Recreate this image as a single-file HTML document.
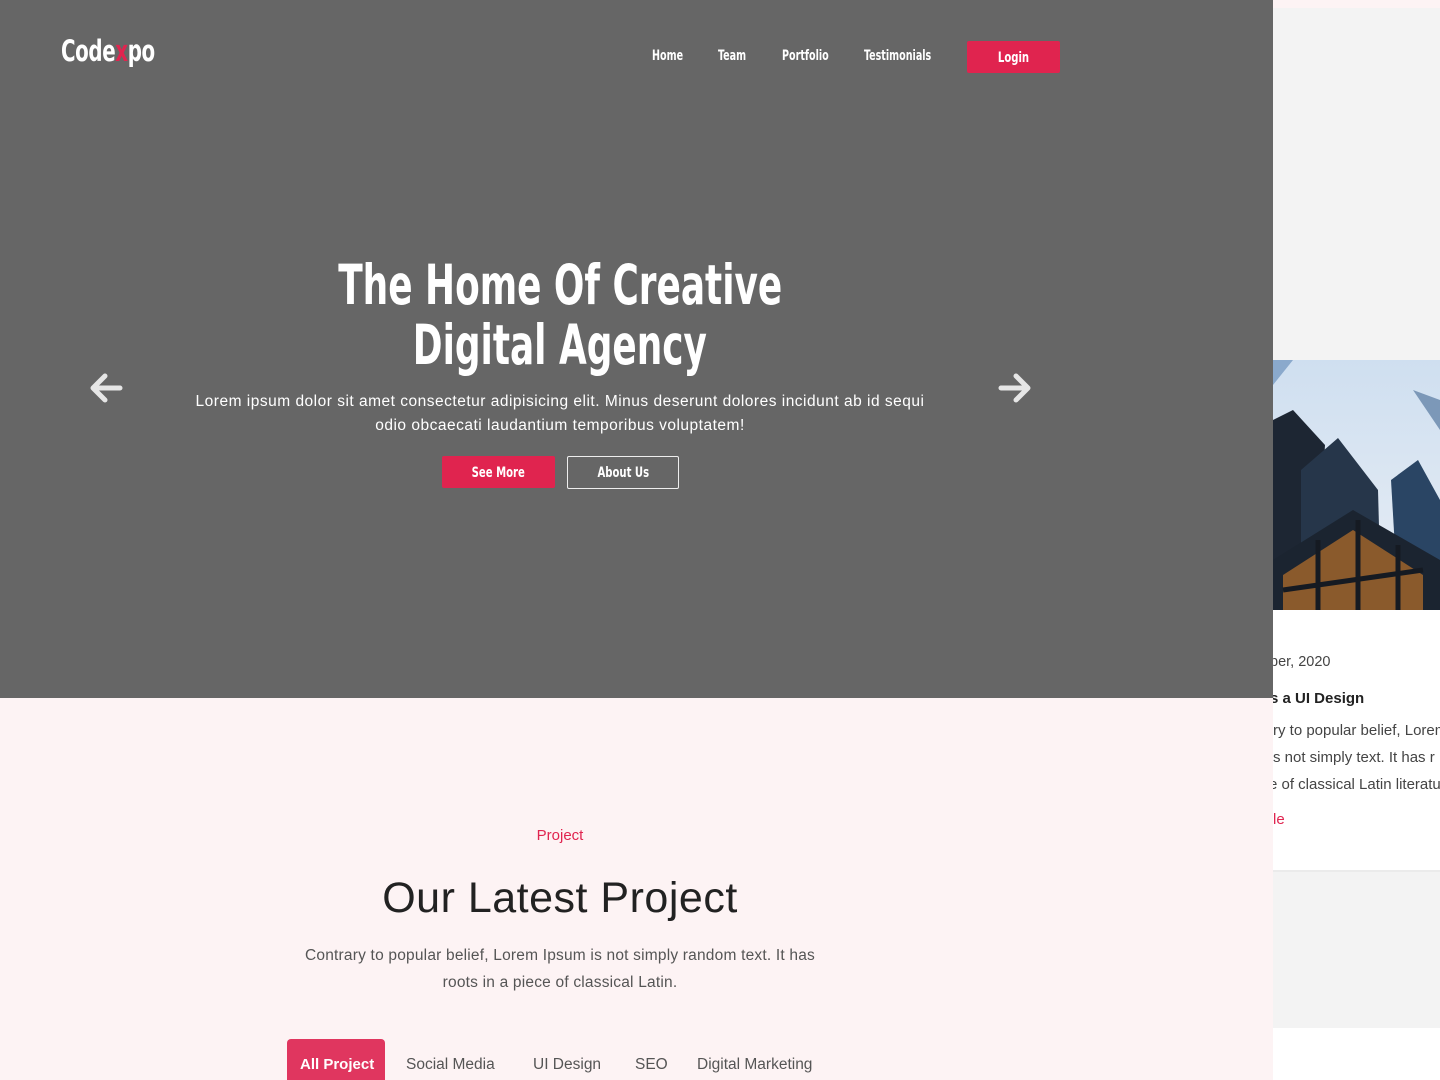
<!DOCTYPE html>
<html><head><meta charset="utf-8"><style>
*{margin:0;padding:0;box-sizing:border-box}
html,body{width:1440px;height:1080px;overflow:hidden}
body{position:relative;background:#fdf3f4;font-family:"Liberation Sans",sans-serif}
.cond{font-family:"Liberation Sans Narrow","DejaVu Sans Condensed","Liberation Sans",sans-serif;font-weight:bold}
.hero{position:absolute;left:0;top:0;width:1273px;height:698px;background:#666666;color:#fff}
.abs{position:absolute}
.sx{display:inline-block;transform:scaleX(0.76);transform-origin:0 50%}
.logo{left:61px;top:34px;font-size:29px;letter-spacing:-0.5px}
.nav{top:48px;font-size:14px;color:#fff}
.btn{position:absolute;background:#e0244f;color:#fff;border-radius:2px;text-align:center;font-size:14px}
.btn span{display:inline-block;transform:scaleX(0.8)}
.title{left:0;width:1120px;text-align:center;font-size:55px;line-height:60px;top:255px}
.title span{display:inline-block;transform:scaleX(0.725)}
.p{left:185px;width:750px;top:390px;text-align:center;font-size:15.5px;line-height:24px;letter-spacing:0.5px}
.right{position:absolute;left:1273px;top:0;width:167px;height:1080px;background:#fff;overflow:hidden}
</style></head><body>
<div class="hero">
 <div class="abs logo cond"><span class="sx">Code<span style="color:#e0244f">x</span>po</span></div>
 <div class="abs nav cond" style="left:652px"><span class="sx">Home</span></div>
 <div class="abs nav cond" style="left:718px"><span class="sx">Team</span></div>
 <div class="abs nav cond" style="left:782px"><span class="sx">Portfolio</span></div>
 <div class="abs nav cond" style="left:864px"><span class="sx">Testimonials</span></div>
 <div class="btn cond" style="left:967px;top:41px;width:93px;height:32px;line-height:34px"><span>Login</span></div>
 <div class="abs title cond"><span>The Home Of Creative</span><br><span>Digital Agency</span></div>
 <div class="abs p">Lorem ipsum dolor sit amet consectetur adipisicing elit. Minus deserunt dolores incidunt ab id sequi odio obcaecati laudantium temporibus voluptatem!</div>
 <div class="btn cond" style="left:442px;top:456px;width:113px;height:32px;line-height:34px"><span>See More</span></div>
 <div class="btn cond" style="left:567px;top:456px;width:112px;height:33px;line-height:33px;background:none;border:1.5px solid #eee"><span>About Us</span></div>
 <svg class="abs" style="left:88px;top:372px" width="36" height="32" viewBox="0 0 36 32"><path d="M32 16H6M17 4L5 16l12 12" stroke="#e6e6e6" stroke-width="5" fill="none" stroke-linecap="round" stroke-linejoin="round"/></svg>
 <svg class="abs" style="left:997px;top:372px" width="36" height="32" viewBox="0 0 36 32"><path d="M4 16h26M19 4l12 12-12 12" stroke="#e6e6e6" stroke-width="5" fill="none" stroke-linecap="round" stroke-linejoin="round"/></svg>
</div>
<div class="abs" style="left:0;top:827px;width:1120px;text-align:center;color:#e0244f;font-size:15px">Project</div>
<div class="abs" style="left:0;top:874px;width:1120px;text-align:center;color:#222;font-size:43px;letter-spacing:0.5px">Our Latest Project</div>
<div class="abs" style="left:292px;top:942px;width:536px;text-align:center;color:#555;font-size:15.5px;line-height:27px;letter-spacing:0.2px">Contrary to popular belief, Lorem Ipsum is not simply random text. It has roots in a piece of classical Latin.</div>
<div class="abs" style="left:287px;top:1039px;width:98px;height:50px;background:#e0365f;border-radius:4px 4px 0 0;color:#fff;font-size:15px;font-weight:bold;padding:17px 0 0 13px">All Project</div>
<div class="abs" style="left:406px;top:1056px;color:#555;font-size:15.5px">Social Media</div>
<div class="abs" style="left:533px;top:1056px;color:#555;font-size:15.5px">UI Design</div>
<div class="abs" style="left:635px;top:1056px;color:#555;font-size:15.5px">SEO</div>
<div class="abs" style="left:697px;top:1056px;color:#555;font-size:15.5px">Digital Marketing</div>
<div class="right">
 <div class="abs" style="left:0;top:0;width:167px;height:8px;background:#fdf3f4"></div>
 <div class="abs" style="left:0;top:8px;width:167px;height:352px;background:#f3f3f3"></div>
 <svg class="abs" style="left:0;top:360px" width="167" height="250" viewBox="0 0 167 250">
  <defs><linearGradient id="s" x1="0" y1="0" x2="0" y2="1"><stop offset="0" stop-color="#cfdff0"/><stop offset="1" stop-color="#e8eef5"/></linearGradient></defs>
  <rect width="167" height="250" fill="url(#s)"/>
  <polygon points="0,0 20,0 0,25" fill="#8aa9cc"/>
  <polygon points="140,30 167,40 167,70" fill="#7c98b8"/>
  <polygon points="0,60 20,50 52,85 45,200 0,210" fill="#1d2633"/>
  <polygon points="28,110 65,78 105,130 108,240 28,240" fill="#26364a"/>
  <polygon points="118,120 145,100 167,140 167,240 125,240" fill="#2a4564"/>
  <polygon points="0,200 80,150 167,200 167,250 0,250" fill="#1b2430"/>
  <polygon points="10,215 80,170 150,215 150,250 10,250" fill="#8a5a2c"/>
  <path d="M45 180v70M85 160v90M125 185v65M10 230l140-20" stroke="#151a22" stroke-width="5"/>
 </svg>
 <div class="abs" style="left:-3px;top:654px;font-size:14.5px;color:#444;white-space:nowrap">ber, 2020</div>
 <div class="abs" style="left:-3px;top:690px;font-size:15px;font-weight:bold;color:#222;white-space:nowrap">s a UI Design</div>
 <div class="abs" style="left:0;top:717px;font-size:15px;color:#444;line-height:27px;white-space:nowrap">ry to popular belief, Lorem<br>s not simply text. It has r<br><span style="margin-left:-4px">e of classical Latin literature</span></div>
 <div class="abs" style="left:0;top:811px;font-size:15px;color:#e0244f">le</div>
 <div class="abs" style="left:0;top:870px;width:167px;height:158px;background:#f3f3f3;border-top:2px solid #ebebeb"></div>
</div>
</body></html>
